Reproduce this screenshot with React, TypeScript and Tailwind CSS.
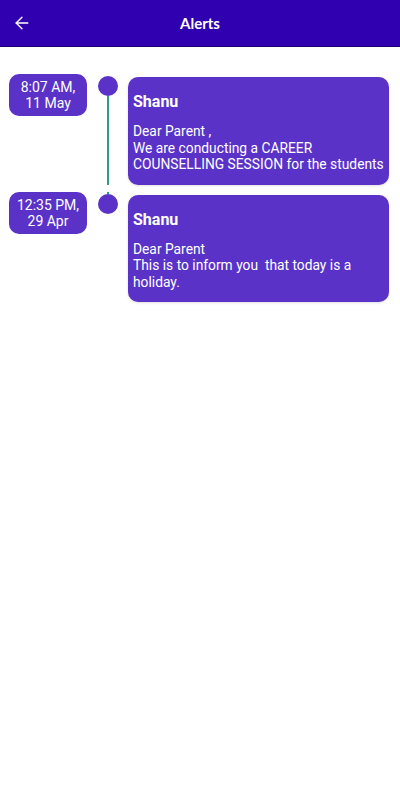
import { ArrowLeft } from 'lucide-react'

interface Alert {
  time: string
  date: string
  sender: string
  lines: string[]
}

const alerts: Alert[] = [
  {
    time: '8:07 AM,',
    date: '11 May',
    sender: 'Shanu',
    lines: ['Dear Parent ,', 'We are conducting a CAREER COUNSELLING SESSION for the students'],
  },
  {
    time: '12:35 PM,',
    date: '29 Apr',
    sender: 'Shanu',
    lines: ['Dear Parent', 'This is to inform you\u00a0 that today is a holiday.'],
  },
]

function AlertRow({ alert, first, last }: { alert: Alert; first: boolean; last: boolean }) {
  return (
    <div className={`flex items-stretch ${last ? '' : 'pb-[7px]'}`}>
      <div className="ml-[9px] w-[78px] h-[42px] shrink-0 rounded-[10px] bg-[#5a32c8] flex flex-col items-center justify-center text-white text-[14px] leading-[16px]">
        <span>{alert.time}</span>
        <span>{alert.date}</span>
      </div>
      <div className="w-[41px] shrink-0 flex flex-col items-center">
        <div className={`w-[2px] h-[2px] ${first ? '' : 'bg-[#2a9d8f]'}`} />
        <div className="w-[20px] h-[20px] rounded-full bg-[#5a32c8] shrink-0" />
        {!last && <div className="w-[2px] flex-1 bg-[#2a9d8f]" />}
      </div>
      <div className="mt-[3px] w-[261px] rounded-[10px] bg-[#5a32c8] text-white pl-[5px] pr-0 pt-[15px] pb-[12px] shadow-sm">
        <div className="text-[16px] leading-[20px] font-bold">{alert.sender}</div>
        <div className="mt-[11px] text-[13.8px] leading-[16.5px]">
          {alert.lines.map((l, i) => (
            <div key={i}>{l}</div>
          ))}
        </div>
      </div>
    </div>
  )
}

export default function App() {
  return (
    <div className="w-[400px] min-h-[800px] bg-white font-['Roboto',sans-serif]">
      <div className="h-[47px] bg-[#3000b0] border-b border-[#1c0070] flex items-center relative">
        <ArrowLeft className="absolute left-[12px] text-white" size={20} strokeWidth={1.6} />
        <div className="w-full text-center text-white font-['Lato',sans-serif] font-bold text-[15px]">Alerts</div>
      </div>
      <div className="pt-[27px]">
        {alerts.map((a, i) => (
          <AlertRow key={i} alert={a} first={i === 0} last={i === alerts.length - 1} />
        ))}
      </div>
    </div>
  )
}
